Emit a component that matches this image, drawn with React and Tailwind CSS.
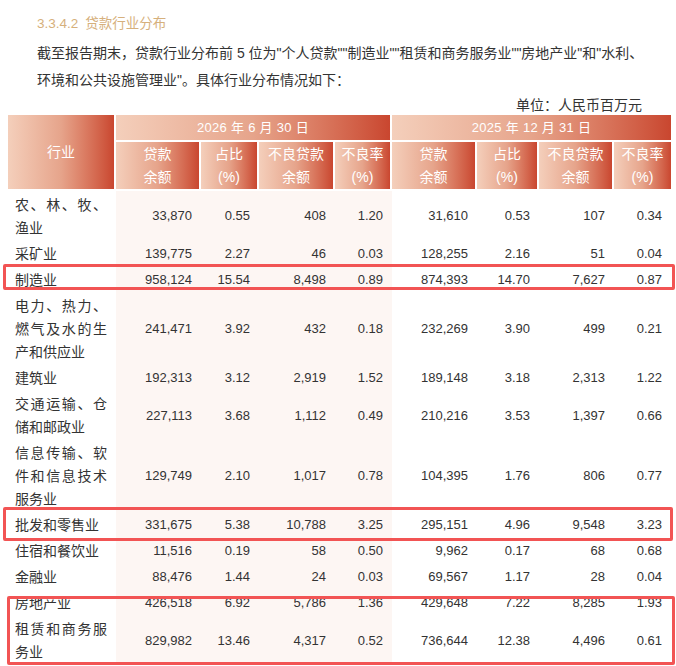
const rows = [
  { name: "农、林、牧、渔业", v: ["33,870", "0.55", "408", "1.20", "31,610", "0.53", "107", "0.34"] },
  { name: "采矿业", v: ["139,775", "2.27", "46", "0.03", "128,255", "2.16", "51", "0.04"] },
  { name: "制造业", v: ["958,124", "15.54", "8,498", "0.89", "874,393", "14.70", "7,627", "0.87"] },
  { name: "电力、热力、燃气及水的生产和供应业", v: ["241,471", "3.92", "432", "0.18", "232,269", "3.90", "499", "0.21"] },
  { name: "建筑业", v: ["192,313", "3.12", "2,919", "1.52", "189,148", "3.18", "2,313", "1.22"] },
  { name: "交通运输、仓储和邮政业", v: ["227,113", "3.68", "1,112", "0.49", "210,216", "3.53", "1,397", "0.66"] },
  { name: "信息传输、软件和信息技术服务业", v: ["129,749", "2.10", "1,017", "0.78", "104,395", "1.76", "806", "0.77"] },
  { name: "批发和零售业", v: ["331,675", "5.38", "10,788", "3.25", "295,151", "4.96", "9,548", "3.23"] },
  { name: "住宿和餐饮业", v: ["11,516", "0.19", "58", "0.50", "9,962", "0.17", "68", "0.68"] },
  { name: "金融业", v: ["88,476", "1.44", "24", "0.03", "69,567", "1.17", "28", "0.04"] },
  { name: "房地产业", v: ["426,518", "6.92", "5,786", "1.36", "429,648", "7.22", "8,285", "1.93"] },
  { name: "租赁和商务服务业", v: ["829,982", "13.46", "4,317", "0.52", "736,644", "12.38", "4,496", "0.61"] },
];

const subHeads = [
  ["贷款", "余额"],
  ["占比", "(%)"],
  ["不良贷款", "余额"],
  ["不良率", "(%)"],
];

const grad = "bg-linear-to-r from-[#f4cfbb] via-[#e6a48b] to-[#c9462f]";

function HeadCell({ lines }) {
  return (
    <div className={`${grad} flex flex-col items-center justify-center leading-[23px] text-white text-[14px]`}>
      {lines.map((l) => (
        <span key={l}>{l}</span>
      ))}
    </div>
  );
}

export default function App() {
  return (
    <div
      className="relative w-[676px] h-[666px] overflow-hidden bg-white text-[#333]"
      style={{ fontFamily: '"Liberation Sans", "Noto Sans CJK SC", sans-serif' }}
    >
      <div className="pl-[37px] pt-[14px] text-[13.5px] leading-[20px] text-[#d6b07c]">
        3.3.4.2<span className="ml-[7px]">贷款行业分布</span>
      </div>
      <p className="pl-[37px] mt-[6px] text-[14px] leading-[27px]">
        截至报告期末，贷款行业分布前 5 位为"个人贷款""制造业""租赁和商务服务业""房地产业"和"水利、
        <br />
        环境和公共设施管理业"。具体行业分布情况如下：
      </p>
      <div className="pr-[34px] mt-px text-right text-[14px] leading-[20px]">单位：人民币百万元</div>

      <div className="ml-[8px] w-[663px]">
        <div className="grid grid-cols-[106px_83px_56px_74px_55px_83px_60px_73px_57px] grid-rows-[25px_47px] gap-[2px]">
          <div className={`${grad} row-span-2 flex items-center justify-center text-white text-[14px]`}>行业</div>
          <div className={`${grad} col-span-4 flex items-center justify-center text-white text-[13px] tracking-[0.3px]`}>
            2026 年 6 月 30 日
          </div>
          <div className={`${grad} col-span-4 flex items-center justify-center text-white text-[13px] tracking-[0.3px]`}>
            2025 年 12 月 31 日
          </div>
          {subHeads.map((h) => (
            <HeadCell key={"a" + h[0]} lines={h} />
          ))}
          {subHeads.map((h) => (
            <HeadCell key={"b" + h[0]} lines={h} />
          ))}
        </div>

        <div className="mt-[2px]">
          {rows.map((r, i) => (
            <div
              key={r.name}
              className="grid grid-cols-[108px_85px_58px_76px_57px_85px_62px_75px_57px] text-[13px]"
            >
              <div className={`pl-[7px] pr-[9px] text-[14px] leading-[23px] text-justify ${i === 0 ? "pt-[3px]" : "pt-[2px]"} pb-px`}>
                {r.name}
              </div>
              {r.v.map((x, j) => (
                <div
                  key={j}
                  className={`flex items-center justify-end pr-[9px] ${j < 4 ? "bg-[#fdf6f3]" : ""}`}
                >
                  {x}
                </div>
              ))}
            </div>
          ))}
        </div>
      </div>

      <div className="absolute left-[3px] top-[264px] w-[672px] h-[26px] border-[3px] border-[#f25454] rounded-[2px]" />
      <div className="absolute left-[3px] top-[507px] w-[670px] h-[34px] border-[3px] border-[#f25454] rounded-[2px]" />
      <div className="absolute left-[7px] top-[596px] w-[668px] h-[69px] border-[3px] border-[#f25454] rounded-[2px]" />
    </div>
  );
}
